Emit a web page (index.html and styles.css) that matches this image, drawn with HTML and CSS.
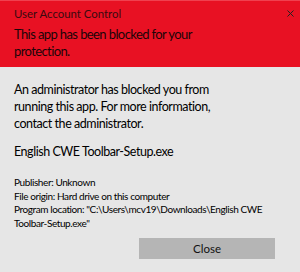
FILE: index.html
```html
<!DOCTYPE html>
<html>
<head>
<meta charset="utf-8">
<link rel="stylesheet" href="styles.css">
</head>
<body>
<div class="dialog">
  <div class="header">
    <div class="caption">
      <span class="caption-text">User Account Control</span>
      <svg class="close-x" width="7" height="7" viewBox="0 0 7 7"><path d="M0.5 0.5L6.5 6.5M6.5 0.5L0.5 6.5" stroke="#222" stroke-width="1"/></svg>
    </div>
    <div class="title">This app has been blocked for your protection.</div>
  </div>
  <div class="body">
    <p class="message">An administrator has blocked you from running this app. For more information, contact the administrator.</p>
    <p class="appname">English CWE Toolbar-Setup.exe</p>
    <div class="details">
      <div>Publisher: Unknown</div>
      <div>File origin: Hard drive on this computer</div>
      <div>Program location: "C:\Users\mcv19\Downloads\English CWE Toolbar-Setup.exe"</div>
    </div>
    <div class="actions">
      <button class="btn">Close</button>
    </div>
  </div>
</div>
</body>
</html>
```
FILE: styles.css
```css
html, body {
  margin: 0;
  padding: 0;
  background: #e6e6e6;
}
.dialog {
  width: 300px;
  height: 272px;
  display: flex;
  flex-direction: column;
  font-family: Lato, "Noto Sans", sans-serif;
  color: #000;
}
.header {
  background: #e81123;
  border-top: 1px solid #f0404f;
  height: 67px;
  padding: 0 14px;
  box-sizing: border-box;
}
.caption {
  display: flex;
  justify-content: space-between;
  align-items: center;
  height: 19px;
  padding-top: 3px;
}
.caption-text {
  font-size: 11.4px;
  color: #3a0a0f;
}
.close-x {
  margin-right: -8px;
}
.title {
  font-size: 13px;
  letter-spacing: -0.6px;
  line-height: 17px;
  padding-top: 3px;
  color: #1a0508;
  width: 230px;
}
.body {
  padding: 14px 14px 0 14px;
}
.message {
  margin: 0;
  font-size: 12.5px;
  letter-spacing: -0.45px;
  line-height: 17px;
  width: 228px;
}
.appname {
  margin: 11px 0 0 0;
  font-size: 12.5px;
  letter-spacing: -0.45px;
  line-height: 17px;
}
.details {
  margin-top: 16px;
  font-size: 10px;
  letter-spacing: -0.4px;
  line-height: 13.5px;
  width: 262px;
}
.actions {
  display: flex;
  justify-content: flex-end;
  margin-top: 8px;
  padding-right: 11px;
}
.btn {
  width: 136px;
  height: 21px;
  background: #b5b5b5;
  border: none;
  font-family: inherit;
  font-size: 11.5px;
  color: #111;
  padding: 0;
}
```
